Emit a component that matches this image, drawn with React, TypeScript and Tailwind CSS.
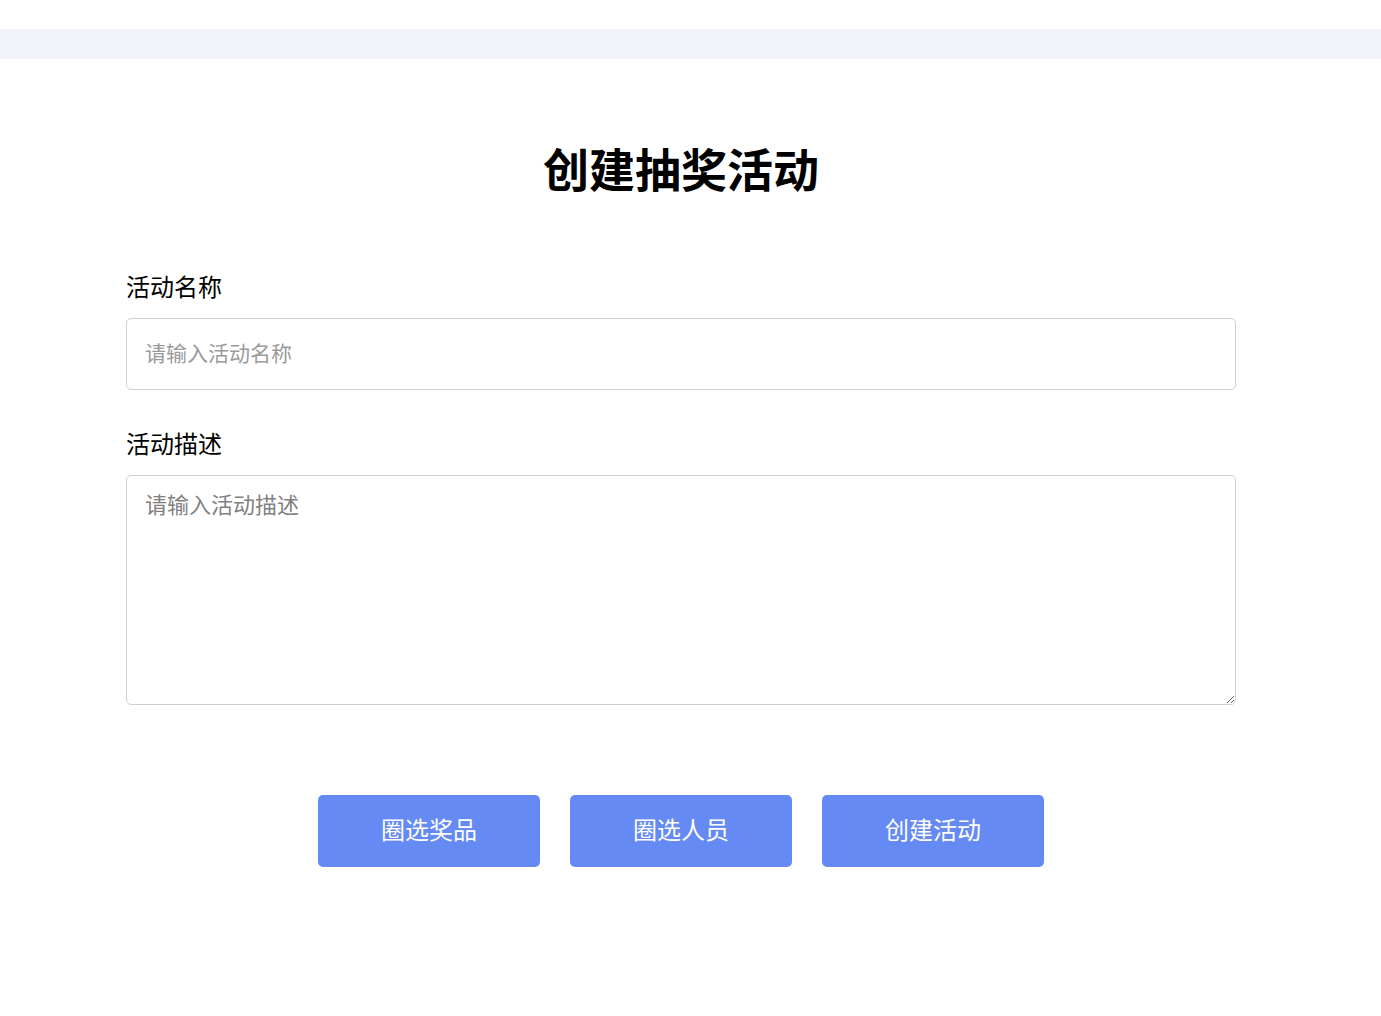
import React, { useState } from "react";

export default function App() {
  const [name, setName] = useState("");
  const [desc, setDesc] = useState("");

  return (
    <main
      className="min-h-screen bg-white text-black"
      style={{ fontFamily: '"Noto Sans CJK SC", "Noto Sans", sans-serif' }}
    >
      {/* top strip */}
      <div className="h-[29px]" />
      <div className="h-[30px] bg-[#f3f3fc]" />

      <section className="ml-[126px] w-[1110px]">
        <h1 className="mt-[74px] text-center text-[46px] font-bold leading-[69px]">
          创建抽奖活动
        </h1>

        <div className="mt-[66px]">
          <label className="block text-[24px] leading-[36px]">活动名称</label>
          <input
            value={name}
            onChange={(e) => setName(e.target.value)}
            placeholder="请输入活动名称"
            className="mt-[14px] h-[72px] w-full rounded-[5px] border border-[#d0d0d4] px-[18px] pb-[4px] text-[21px] outline-none placeholder:text-[#9a9a9a]"
          />
        </div>

        <div className="mt-[35px]">
          <label className="block text-[24px] leading-[36px]">活动描述</label>
          <textarea
            value={desc}
            onChange={(e) => setDesc(e.target.value)}
            placeholder="请输入活动描述"
            className="mt-[14px] block h-[230px] w-full rounded-[5px] border border-[#d0d0d4] px-[18px] pt-[11px] pb-[13px] text-[22px] leading-[32px] outline-none placeholder:text-[#808080]"
          />
        </div>

        <div className="mt-[90px] flex justify-center gap-[30px]">
          {["圈选奖品", "圈选人员", "创建活动"].map((t) => (
            <button
              key={t}
              className="h-[72px] w-[222px] rounded-[5px] bg-[#658af3] pb-[4px] text-[24px] text-white"
            >
              {t}
            </button>
          ))}
        </div>
      </section>
    </main>
  );
}
